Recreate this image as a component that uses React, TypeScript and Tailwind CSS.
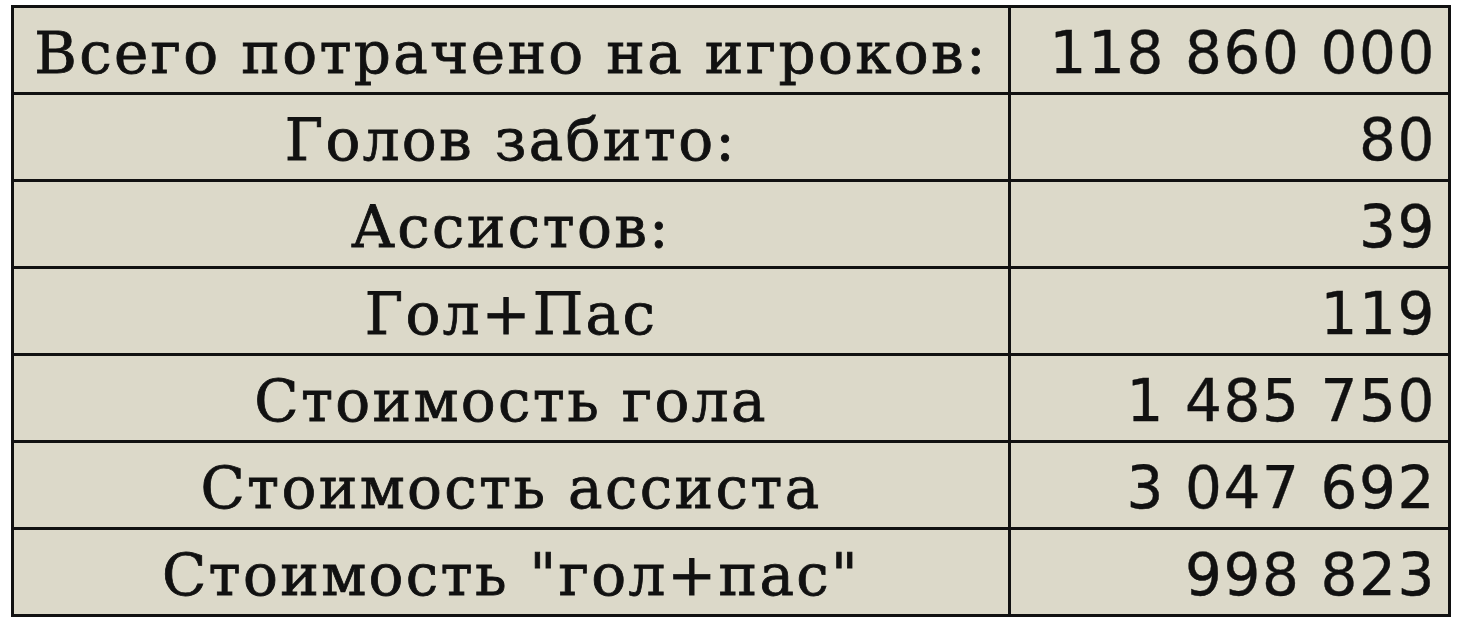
import React from 'react';

const rows: [string, string][] = [
  ['Всего потрачено на игроков:', '118 860 000'],
  ['Голов забито:', '80'],
  ['Ассистов:', '39'],
  ['Гол+Пас', '119'],
  ['Стоимость гола', '1 485 750'],
  ['Стоимость ассиста', '3 047 692'],
  ['Стоимость "гол+пас"', '998 823'],
];

export default function App() {
  return (
    <div className="w-[1460px] h-[628px] bg-white overflow-hidden pt-[5px] pl-[11px]">
      <table className="border-collapse bg-[#dcd9c9] text-[#111]">
        <tbody>
          {rows.map(([label, value]) => (
            <tr key={label} className="h-[87px]">
              <td className="w-[997px] border-[3px] border-[#111] text-center align-middle pt-[6px] font-['DejaVu_Serif',serif] text-[58px] leading-none tracking-[2.3px] [-webkit-text-stroke:0.8px_#111] whitespace-nowrap">
                {label}
              </td>
              <td className="w-[440px] border-[3px] border-[#111] text-right align-middle pt-[6px] pr-[12px] font-['DejaVu_Sans',sans-serif] text-[58px] leading-none tracking-[1.6px] [-webkit-text-stroke:0.4px_#111] whitespace-nowrap">
                {value}
              </td>
            </tr>
          ))}
        </tbody>
      </table>
    </div>
  );
}
